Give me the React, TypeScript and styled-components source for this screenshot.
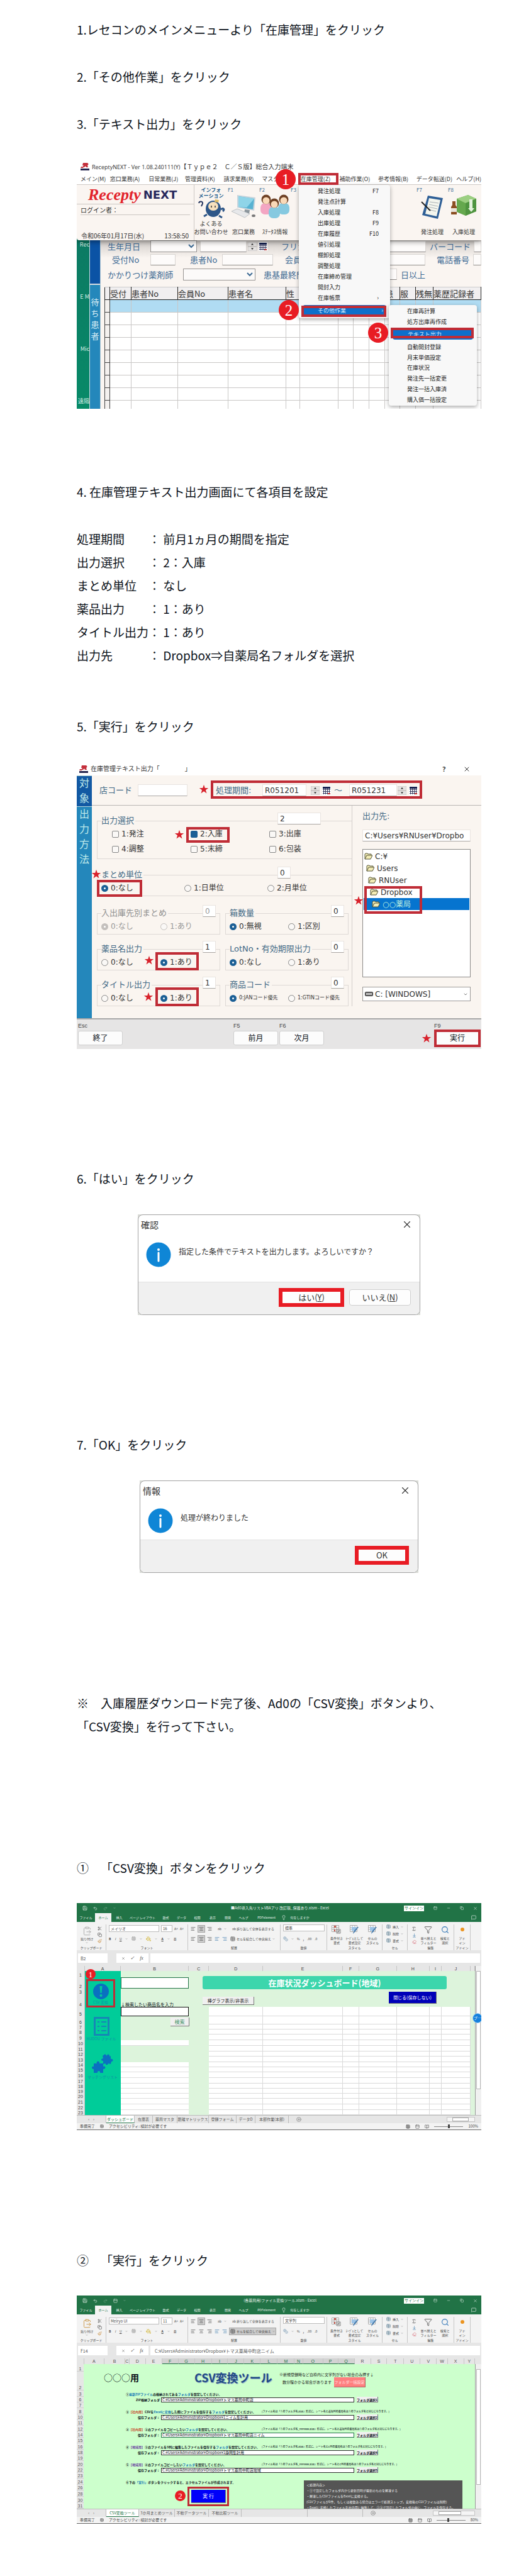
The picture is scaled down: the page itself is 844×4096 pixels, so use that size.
import React from "react";
import styled, { createGlobalStyle, css } from "styled-components";
import {
  Save, Undo2, Redo2, Lightbulb, MessageSquare, Scissors, Copy, Paintbrush, Search, Filter,
  X, Minus, Eraser, Sigma, ClipboardPaste, Grid3x3, Table, PaintBucket, AlignLeft,
  AlignCenter, AlignRight, CirclePlus, ChevronDown, PanelTop, Coins, ArrowDownToLine, BookOpen,
} from "lucide-react";

const JP = '"Noto Sans CJK JP", sans-serif';
const VERDANA = '"DejaVu Sans", "Noto Sans CJK JP", sans-serif';
const RED = "#bf2c36";

const GlobalStyle = createGlobalStyle`
  *, *::before, *::after { box-sizing: border-box; }
  body { margin: 0; background: #fff; color: #0b1119; font-family: ${JP}; text-spacing-trim: space-all; }
  p, dl, dd, ul, fieldset, figure { margin: 0; padding: 0; }
  ul { list-style: none; }
  fieldset { min-width: 0; }
  button, input, select { font: inherit; color: inherit; margin: 0; padding: 0; border: 0; background: none; border-radius: 0; min-width: 0; }
  svg { display: block; flex: none; }
`;

/* ---------- page ---------- */

const Page = styled.main`
  padding: 28px 79px 85px 122px;
`;

const Line = styled.p<{ $top?: number }>`
  margin-top: ${(p) => p.$top ?? 0}px;
  font-size: 19px;
  line-height: 37px;
`;

const Settings = styled.dl`
  margin-top: 38px;
  display: grid;
  grid-template-columns: 114px 1fr;
  font-size: 19px;
  line-height: 37px;
`;

const Shot = styled.figure<{ $h: number; $top: number; $w?: number; $bg?: string; $font?: string }>`
  position: relative;
  margin: ${(p) => p.$top}px auto 0;
  max-width: ${(p) => (p.$w ? `${p.$w}px` : "none")};
  min-height: ${(p) => p.$h}px;
  display: flex;
  flex-direction: column;
  overflow: hidden;
  line-height: 1;
  white-space: nowrap;
  background: ${(p) => p.$bg ?? "#fff"};
  font-family: ${(p) => p.$font ?? JP};
`;

/* ---------- annotations laid over the screens ---------- */

type Spot = { $x: number; $y: number };

const Frame = styled.span<Spot & { $w: number; $h: number; $b?: number }>`
  position: absolute;
  z-index: 4;
  pointer-events: none;
  left: ${(p) => p.$x}px;
  top: ${(p) => p.$y}px;
  width: ${(p) => p.$w}px;
  height: ${(p) => p.$h}px;
  border: ${(p) => p.$b ?? 4}px solid ${RED};
`;

const Badge = styled.span<Spot & { $d: number }>`
  position: absolute;
  z-index: 5;
  left: ${(p) => p.$x}px;
  top: ${(p) => p.$y}px;
  width: ${(p) => p.$d}px;
  height: ${(p) => p.$d}px;
  display: grid;
  place-items: center;
  border-radius: 50%;
  background: #e81c24;
  color: #fff;
  font-family: "Liberation Serif", serif;
  font-size: ${(p) => (p.$d > 20 ? 25 : 13)}px;
`;

const StarSpot = styled.span<Spot>`
  position: absolute;
  z-index: 4;
  left: ${(p) => p.$x}px;
  top: ${(p) => p.$y}px;
`;

const Star = ({ x, y }: { x: number; y: number }) => (
  <StarSpot $x={x - 8} $y={y - 8}>
    <svg width="16" height="16" viewBox="0 0 16 16">
      <path d="M8 .8l1.8 5.1h5.4l-4.3 3.3 1.6 5.3L8 11.3l-4.5 3.2 1.6-5.3L.8 5.9h5.4z" fill="#d8222c" />
    </svg>
  </StarSpot>
);

/* ---------- shared drawings ---------- */

const NextLogo = () => (
  <svg width="14" height="12" viewBox="0 0 14 12">
    <path d="M4 0h7c2 1 2 3 0 4l1 3H9L8 5 6 7H3l2-3H3zM1 6h4L4 8H0z" fill="#c4303c" />
    <path d="M0 9h14v3H0z" fill="#25264f" />
  </svg>
);

const CalendarIcon = () => (
  <svg width="14" height="14" viewBox="0 0 14 14">
    <rect width="14" height="14" fill="#fff" />
    <rect x="1" y="1" width="12" height="3" fill="#16204f" />
    <path d="M1 5.500h12M1 8.500h12M1 11.500h12M2.500 4v9M5.500 4v9M8.500 4v9M11.500 4v9" stroke="#3c3f63" />
    <path d="M9 11h4v2H9z" fill="#b33" />
  </svg>
);

const SpinIcon = () => (
  <svg width="14" height="14" viewBox="0 0 14 14">
    <path d="M0 0h14v6.500H0zM0 7.500h14V14H0z" fill="#e4e2e1" stroke="#b5b2b0" strokeWidth=".6" />
    <path d="M7 2l2 2.500H5zM7 12l2-2.500H5z" fill="#222" />
  </svg>
);

const InfoIcon = () => (
  <svg width="40" height="40" viewBox="0 0 40 40">
    <circle cx="20" cy="20" r="19.500" fill="#0f86d6" />
    <circle cx="20" cy="12" r="2" fill="#fff" />
    <path d="M20 17v13" stroke="#fff" strokeWidth="3" strokeLinecap="round" />
  </svg>
);

/* ---------- step 1-3: main menu ---------- */

const TopWindow = styled.div`
  position: relative;
  z-index: 2;
  height: 128px;
  background: #faf5f1;
  border-bottom-left-radius: 4px;
  box-shadow: 0 2px 8px rgba(0, 0, 0, 0.45);
`;

const TitleBar = styled.div`
  display: flex;
  align-items: center;
  gap: 4px;
  height: 22px;
  padding-left: 6px;
  background: #fff;
  color: #333;
  font-size: 10px;
  b { font: 9px "Open Sans", sans-serif; }
`;

const MenuBar = styled.nav`
  display: grid;
  grid-template-columns: 47fr 62fr 58fr 62fr 61fr 62fr 62fr 62fr 61fr 64fr 36fr;
  align-items: center;
  height: 18px;
  padding-left: 6px;
  background: #fff;
  border-bottom: 1px solid #cfcac6;
  font-size: 9px;
  a { color: #333; text-decoration: none; }
`;

const ToolRow = styled.div`
  display: flex;
  height: 88px;
`;

const LogoPanel = styled.div`
  flex: none;
  width: 187px;
  border-right: 1px solid #cbc6c2;
  display: flex;
  flex-direction: column;
  font-size: 10px;
  color: #333;
`;

const Logo = styled.div`
  height: 31px;
  padding: 2px 0 0 18px;
  border-bottom: 1px solid #cbc6c2;
  display: flex;
  align-items: center;
  gap: 4px;
  color: #e2232b;
  font: italic bold 26px/26px "Liberation Serif", serif;
  b { color: #27285c; font: bold 18px/20px "DejaVu Sans", sans-serif; }
`;

const Login = styled.div`
  height: 17px;
  margin: 0 6px;
  padding-top: 4px;
  border-bottom: 1px solid #cbc6c2;
`;

const Clock = styled.div`
  display: flex;
  justify-content: space-between;
  margin-top: auto;
  padding: 0 8px 2px 7px;
  font-size: 10px;
`;

const ToolButton = styled.button<{ $w?: number }>`
  flex: none;
  width: ${(p) => p.$w ?? 50}px;
  display: flex;
  flex-direction: column;
  align-items: center;
  padding: 3px 0 7px;
  font-size: 9px;
  line-height: 13px;
  color: #333;
  svg { margin-top: 2px; }
  small { align-self: flex-start; font-size: 8px; line-height: 10px; color: #3a6d96; }
  span { margin-top: auto; }
  strong { font-size: 8px; line-height: 9px; color: #1e5d8d; }
`;

const Mascot = () => (
  <svg width="48" height="32" viewBox="0 0 48 32">
    <path d="M4 6c1-4 7-3 6 1l-2 4" fill="none" stroke="#26365f" strokeWidth="2" />
    <ellipse cx="27" cy="15" rx="12" ry="13" fill="#2d5688" />
    <ellipse cx="27" cy="11" rx="8" ry="7" fill="#f7e0bd" />
    <path d="M24 10v3M30 10v3" stroke="#333" strokeWidth="1.500" />
    <path d="M17 24l-5 3M36 26l5 3M39 16c4-3 7 0 3 3" fill="none" stroke="#2d5688" strokeWidth="3" />
    <path d="M30 0l6 1-1 4-6-1z" fill="#e3bd62" />
  </svg>
);
const Computer = () => (
  <svg width="40" height="38" viewBox="0 0 40 38">
    <path d="M10 1l29 4-2 21-27-5z" fill="#c8d4dc" />
    <path d="M12 3l25 4-2 17-23-4z" fill="#57b2d2" />
    <path d="M12 3l25 4-12 14-13-1z" fill="#8fd4e8" />
    <path d="M22 24l8 1-1 6h-8z" fill="#8b959c" />
    <path d="M1 27l9-4 20 8-8 6z" fill="#e7e8ea" stroke="#aab0b5" strokeWidth=".7" />
    <ellipse cx="36" cy="34" rx="3" ry="2" fill="#777" />
  </svg>
);
const People = () => (
  <svg width="46" height="38" viewBox="0 0 46 38">
    {[[9, 8, "#f3a6c3"], [37, 8, "#86c9e0"], [22, 14, "#86c9e0"]].map(([x, y, c], i) => (
      <g key={i}>
        <rect x={+x - 9} y={+y + 6} width="18" height="18" rx="7" fill={String(c)} />
        <circle cx={+x} cy={+y} r="7.500" fill="#6d4024" />
        <circle cx={+x} cy={+y + 2} r="5.500" fill="#f9d9b8" />
      </g>
    ))}
  </svg>
);
const Clipboard = () => (
  <svg width="36" height="40" viewBox="0 0 36 40">
    <path d="M11 2l24 4-8 33L2 33z" fill="#2f5f96" />
    <path d="M13 6l18 3-6 26-18-4z" fill="#f4f6ee" />
    <path d="M14 12l14 2M13 16l14 3M12 20l14 3M11 24l13 3" stroke="#a8b0b3" />
    <path d="M1 12l14 14" stroke="#222" strokeWidth="2" />
  </svg>
);
const BoxIcon = () => (
  <svg width="42" height="36" viewBox="0 0 42 36">
    <path d="M10 7L28 1l13 6v20l-17 7-14-6z" fill="#65a84e" />
    <path d="M10 7L28 1l13 6-17 7z" fill="#9ccf82" />
    <path d="M24 14l17-7v20l-17 7z" fill="#4f9440" />
    <path d="M30 8h5v14h3l-5 6-5-6h2z" fill="#e4f2dd" />
    <path d="M3 11h5v6l2 3v12H1V20l2-3z" fill="#8b4e22" />
    <path d="M1 22h9v6H1z" fill="#e9e4da" />
  </svg>
);

const AppArea = styled.div`
  flex: 1 1 0;
  min-height: 0;
  overflow: hidden;
  display: grid;
  grid-template-columns: 20px 18px 1fr;
`;

const Desktop = styled.div`
  position: relative;
  background: linear-gradient(#0c7a63, #078a68);
  color: #d9efe8;
  font-size: 9px;
  display: flex;
  flex-direction: column;
  align-items: flex-end;
  gap: 74px;
  padding-top: 2px;
  overflow: hidden;
`;

const SideTabs = styled.div`
  display: grid;
  grid-template-rows: 69px 1fr;
  color: #d9eef5;
  font-size: 13px;
  line-height: 18px;
  text-align: center;
  white-space: normal;
  border-left: 1px solid #cfdde2;
  border-right: 1px solid #b7cbd5;
  div:first-child { background: #0b53a5; }
  div:last-child { background: #2487bb; border-top: 2px solid #d7dce0; padding: 18px 1px 0; }
`;

const PatientPane = styled.div`
  background: linear-gradient(#cfcac7, #faf5f1 28px);
  min-width: 0;
  overflow: hidden;
`;

const FormRow = styled.div<{ $cols: string; $h: number }>`
  display: grid;
  grid-template-columns: ${(p) => p.$cols};
  align-items: center;
  height: ${(p) => p.$h}px;
  font-size: 13px;
  color: #3d6a94;
`;

const Field = styled.input`
  width: 100%;
  height: 18px;
  background: #fdfbfa;
  border: 1px solid #d9d5d2;
  border-bottom: 1px solid #8e8b89;
`;

const Dropdown = styled.select`
  width: 100%;
  height: 19px;
  background: #fcfaf9;
  border: 1px solid #989593;
`;

const PatientTable = styled.table`
  width: calc(100% - 6px);
  margin: 8px 0 0 6px;
  table-layout: fixed;
  border-collapse: collapse;
  background: #fff;
  th, td { height: 20px; padding: 0; border: 1px solid #c9c7c6; }
  th { background: #f1eff0; border: 1px solid #222; border-top-color: #ccc; font-size: 13px; line-height: 16px; font-weight: 400; text-align: left; color: #333; overflow: hidden; }
  td:first-child { background: #f4f1ef; border-color: #444; }
  tbody tr:first-child td + td { background: #b0dcf3; }
`;

const Popup = styled.ul<Spot & { $w: number; $h: number; $pad: number }>`
  position: absolute;
  z-index: 3;
  left: ${(p) => p.$x}px;
  top: ${(p) => p.$y}px;
  width: ${(p) => p.$w}px;
  height: ${(p) => p.$h}px;
  padding: 1px 0;
  display: flex;
  flex-direction: column;
  background: #f8f8f8;
  border-radius: 4px;
  box-shadow: 0 2px 6px rgba(0, 0, 0, 0.35);
  font-size: 9px;
  color: #222;
  li { flex: 1; display: flex; align-items: center; justify-content: space-between; padding: 0 18px 0 ${(p) => p.$pad}px; }
`;

const PopupActive = styled.li`
  margin: 3px 6px;
  border-radius: 4px;
  background: #0d6fcb;
  color: #d9ecff;
  && { padding: 0 5px 0 24px; }
`;

const MENU: [string, string?][] = [
  ["発注処理", "F7"], ["発注点計算"], ["入庫処理", "F8"], ["出庫処理", "F9"], ["在庫履歴", "F10"], ["値引処理"],
  ["棚卸処理"], ["調整処理"], ["在庫締め管理"], ["開封入力"], ["在庫帳票", "›"],
];
const TABLE_COLS = [8, 34, 74, 80, 92, 22, 61, 24, 25, 25, 24, 25, 28, 76];
const TABLE_HEADS = ["", "受付", "患者No", "会員No", "患者名", "性", "", "", "", "", "患", "服", "残無", "薬歴記録者"];

const MainMenuShot = () => (
  <Shot $h={396} $top={39} $bg="#0a8067">
    <TopWindow>
      <TitleBar>
        <NextLogo />
        <span><b>ReceptyNEXT - Ver 1.08.240111(Y)</b>【Ｔｙｐｅ２　Ｃ／Ｓ版】総合入力端末</span>
      </TitleBar>
      <MenuBar>
        {["メイン(M)", "窓口業務(A)", "日常業務(J)", "管理資料(K)", "請求業務(R)", "マスタ", "在庫管理(Z)", "補助作業(O)", "参考情報(B)", "データ転送(D)", "ヘルプ(H)"].map((m) => (
          <a href="#menu" key={m}>{m}</a>
        ))}
      </MenuBar>
      <ToolRow>
        <LogoPanel>
          <Logo>Recepty<b>NEXT</b></Logo>
          <Login>ログイン者：</Login>
          <Clock><span>令和06年01月17日(水)</span><span>13:58:50</span></Clock>
        </LogoPanel>
        <ToolButton $w={53}><strong>インフォ<br />メーション</strong><Mascot /><span>よくある<br />お問い合わせ</span></ToolButton>
        <ToolButton><small>F1</small><Computer /><span>窓口業務</span></ToolButton>
        <ToolButton><small>F2</small><People /><span>ｽﾃｰﾀｽ情報</span></ToolButton>
        <ToolButton $w={200}><small>F3</small></ToolButton>
        <ToolButton><small>F7</small><Clipboard /><span>発注処理</span></ToolButton>
        <ToolButton><small>F8</small><BoxIcon /><span>入庫処理</span></ToolButton>
      </ToolRow>
    </TopWindow>
    <AppArea>
      <Desktop><span>Rec</span><span>E M</span><span>Mic</span><span>遠隔</span></Desktop>
      <SideTabs><div /><div>待ち患者</div></SideTabs>
      <PatientPane>
        <FormRow $h={19} $cols="11px 68px 74px 5px 74px 2px 14px 3px 14px 22px 60px 170px 6px 70px 1fr">
          <span /><span>生年月日</span><Dropdown aria-label="生年月日の元号" /><span /><Field aria-label="生年月日" /><span /><SpinIcon /><span /><CalendarIcon />
          <span /><span>フリガナ</span><Field aria-label="フリガナ" /><span /><span>バーコード</span><Field aria-label="バーコード" />
        </FormRow>
        <FormRow $h={23} $cols="18px 61px 40px 23px 51px 81px 19px 52px 171px 18px 58px 1fr">
          <span /><span>受付No</span><Field aria-label="受付No" /><span /><span>患者No</span><Field aria-label="患者No" /><span />
          <span>会員No</span><Field aria-label="会員No" /><span /><span>電話番号</span><Field aria-label="電話番号" />
        </FormRow>
        <FormRow $h={24} $cols="11px 120px 115px 13px 80px 132px 6px 1fr">
          <span /><span>かかりつけ薬剤師</span><Dropdown aria-label="かかりつけ薬剤師" /><span /><span>患基最終間</span><Field aria-label="日数" /><span /><span>日以上</span>
        </FormRow>
        <PatientTable>
          <colgroup>{TABLE_COLS.map((w, i) => <col key={i} width={`${(w / 598) * 100}%`} />)}</colgroup>
          <thead><tr>{TABLE_HEADS.map((h, i) => <th key={i}>{h}</th>)}</tr></thead>
          <tbody>{Array.from({ length: 9 }, (_, r) => <tr key={r}>{TABLE_COLS.map((_, c) => <td key={c} />)}</tr>)}</tbody>
        </PatientTable>
      </PatientPane>
    </AppArea>
    <Popup $x={353} $y={40} $w={145} $h={212} $pad={30}>
      {MENU.map(([t, k]) => <li key={t}><span>{t}</span><span>{k}</span></li>)}
      <PopupActive><span>その他作業</span><span>›</span></PopupActive>
    </Popup>
    <Popup $x={496} $y={231} $w={140} $h={160} $pad={29}>
      <li>在庫再計算</li><li>処方出庫再作成</li>
      <PopupActive>テキスト出力</PopupActive>
      {["自動開封登録", "月末単価設定", "在庫状況", "発注先一括変更", "発注一括入庫済", "購入価一括設定"].map((t) => <li key={t}>{t}</li>)}
    </Popup>
    <Frame $x={352} $y={21} $w={64} $h={19} />
    <Frame $x={357} $y={232} $w={135} $h={18} />
    <Frame $x={499} $y={267} $w={132} $h={17} />
    <Badge $x={316} $y={15} $d={32}>1</Badge>
    <Badge $x={321} $y={223} $d={32}>2</Badge>
    <Badge $x={463} $y={259} $d={32}>3</Badge>
  </Shot>
);

/* ---------- step 5: text output screen ---------- */

const OutTitle = styled(TitleBar)`
  height: 21px;
  padding: 0 13px 0 4px;
  span { flex: 1; }
  button { width: 20px; margin-left: 12px; display: grid; place-items: center; font: bold 10px "Open Sans", sans-serif; }
`;

const OutBody = styled.div`
  flex: 1;
  display: grid;
  grid-template-columns: 24px 1fr;
`;

const OutNav = styled.div`
  display: grid;
  grid-template-rows: 49px 1fr;
  font-size: 16px;
  line-height: 24px;
  text-align: center;
  white-space: normal;
  color: #bfe9ea;
  div { padding: 0 4px; background: #2487bb; border-top: 1px solid #b5d6dc; }
  div:first-child { background: #1259a3; }
`;

const OutHead = styled.div`
  display: grid;
  grid-template-columns: 61px 79px 45px 74px 70px 7px 14px 4px 14px 5px 18px 6px 76px 1px 14px 4px 14px;
  align-items: center;
  height: 48px;
  padding-left: 12px;
  border-bottom: 1px solid #b9b5b2;
  font-size: 13px;
  color: #436a86;
`;

const TextBox = styled.input<{ $w?: number; $off?: boolean }>`
  width: ${(p) => (p.$w ? `${p.$w}px` : "100%")};
  height: 19px;
  padding-left: 3px;
  font-size: 12px;
  color: ${(p) => (p.$off ? "#999" : "#333")};
  background: #fff;
  border: 1px solid #e9e4e0;
  border-bottom-color: #aaa6a3;
`;

const OutMain = styled.div`
  display: grid;
  grid-template-columns: minmax(0, 1fr) 205px;
`;

const Groups = styled.div`
  padding: 15px 0 0 8px;
  border-right: 1px solid #d2cdc9;
`;

const Pair = styled.div<{ $top: number }>`
  display: grid;
  grid-template-columns: 196px 196px;
  gap: 8px;
  margin-top: ${(p) => p.$top}px;
`;

const Group = styled.fieldset<{ $h: number; $top?: number; $off?: boolean; $open?: boolean }>`
  position: relative;
  height: ${(p) => p.$h}px;
  margin-top: ${(p) => p.$top ?? 0}px;
  padding: 0 0 0 6px;
  border: 1px solid #ded9d5;
  ${(p) => p.$open && css`border-right: 0;`}
  color: ${(p) => (p.$off ? "#999" : "#333")};
  legend { padding: 0 2px 0 0; font-size: 13px; line-height: 18px; color: ${(p) => (p.$off ? "#8f8f8f" : "#436a86")}; }
`;

const GroupValue = styled.span<{ $x: number }>`
  position: absolute;
  left: ${(p) => p.$x}px;
  top: -22px;
`;

const Options = styled.div<{ $cols: string; $pad?: number; $small?: boolean }>`
  display: grid;
  grid-template-columns: ${(p) => p.$cols};
  row-gap: 8px;
  padding: 4px 0 0 ${(p) => p.$pad ?? 0}px;
  font-size: ${(p) => (p.$small ? 8 : 12)}px;
  line-height: 16px;
  label { display: flex; align-items: center; gap: 4px; }
`;

const Tick = styled.input`
  appearance: none;
  flex: none;
  width: 11px;
  height: 11px;
  border: 1px solid #888;
  background: #faf8f6;
  border-radius: ${(p) => (p.type === "radio" ? "50%" : "2px")};
  &:checked { ${(p) => (p.type === "radio" ? "border: 4px solid #1b5f95; background: #fff;" : "background: #1b5f95; border-color: #1b5f95;")} }
  &:disabled { border-color: #c4c0bd; }
`;

const OutSide = styled.div`
  display: flex;
  flex-direction: column;
  padding: 9px 17px 0 16px;
  font-size: 12px;
  color: #333;
  > label { font-size: 13px; line-height: 16px; color: #436a86; margin-bottom: 13px; }
`;

const Tree = styled.ul`
  height: 204px;
  margin-top: 12px;
  padding: 1px;
  background: #fff;
  border: 1px solid #8c8a88;
`;

const TreeRow = styled.li<{ $level: number; $on?: boolean }>`
  display: flex;
  align-items: center;
  gap: 4px;
  height: 19px;
  padding-left: ${(p) => 1 + p.$level * 3}px;
  background: ${(p) => (p.$on ? "#0674cf" : "transparent")};
  color: ${(p) => (p.$on ? "#bff0e0" : "inherit")};
`;

const DriveBox = styled.div`
  display: flex;
  align-items: center;
  gap: 3px;
  height: 23px;
  margin-top: 15px;
  padding: 0 3px;
  background: #fff;
  border: 1px solid #9c9a98;
  color: #333;
  select { flex: 1; appearance: none; }
`;

const OutFoot = styled.div`
  display: grid;
  grid-template-columns: 71px 176px 71px 2px 71px 175px 74px 1fr;
  padding: 5px 0 0 2px;
  height: 49px;
  background: #e6e5e5;
  border-top: 2px solid #a9a9a9;
  font-size: 12px;
  div { display: flex; flex-direction: column; gap: 2px; }
  small { font: 9px/11px "Liberation Sans", sans-serif; color: #444; }
  button { height: 23px; background: #fcfcfc; border: 1px solid #cfcfcf; border-radius: 3px; }
`;

const Folder = () => (
  <svg width="13" height="11" viewBox="0 0 13 11">
    <path d="M1 10V2l1-1h3l1 1h5v2M1 10l3-6h9l-3 6z" fill="#f3ecb5" stroke="#555438" />
  </svg>
);

const DriveIcon = () => (
  <svg width="13" height="7" viewBox="0 0 13 7">
    <rect x=".5" y=".5" width="12" height="6" rx="1" fill="#8a8a8a" stroke="#222" />
    <path d="M2 3.500h9" stroke="#fff" />
  </svg>
);

type OptGroup = { name: string; legend: string; value: string; x: number; sel: number; opts: string[]; cols: string; off?: boolean; small?: boolean; top?: number; open?: boolean };

const RadioGroup = (g: OptGroup) => (
  <Group $h={43} $top={g.top} $off={g.off} $open={g.open} disabled={g.off}>
    <legend>{g.legend}</legend>
    <GroupValue $x={g.x}><TextBox $w={21} $off={g.off} aria-label={g.legend} defaultValue={g.value} /></GroupValue>
    <Options $cols={g.cols} $small={g.small}>
      {g.opts.map((o, i) => <label key={o}><Tick type="radio" name={g.name} defaultChecked={i === g.sel} />{o}</label>)}
    </Options>
  </Group>
);

const OutputShot = () => (
  <Shot $h={456} $top={39} $bg="#faf5f0" $font={VERDANA}>
    <OutTitle><NextLogo /><span>在庫管理テキスト出力「　　　　」</span><button>?</button><button aria-label="閉じる"><X size={12} /></button></OutTitle>
    <OutBody>
      <OutNav><div>対象</div><div>出力方法</div></OutNav>
      <div>
        <OutHead>
          <label htmlFor="shop">店コード</label><TextBox id="shop" /><span /><label htmlFor="from">処理期間:</label>
          <TextBox id="from" defaultValue="R051201" /><span /><SpinIcon /><span /><CalendarIcon /><span /><span>～</span><span />
          <TextBox aria-label="処理期間の終わり" defaultValue="R051231" /><span /><SpinIcon /><span /><CalendarIcon />
        </OutHead>
        <OutMain>
          <Groups>
            <Group $h={70} $open>
              <legend>出力選択</legend>
              <GroupValue $x={286}><TextBox $w={69} aria-label="出力選択" defaultValue="2" /></GroupValue>
              <Options $cols="125px 125px 1fr" $pad={17}>
                {["1:発注", "2:入庫", "3:出庫", "4:調整", "5:末締", "6:包装"].map((o, i) => (
                  <label key={o}><Tick type="checkbox" defaultChecked={i === 1} />{o}</label>
                ))}
              </Options>
            </Group>
            <RadioGroup name="unit" legend="まとめ単位" value="0" x={286} sel={0} opts={["0:なし", "1:日単位", "2:月単位"]} cols="132px 132px 1fr" top={16} open />
            <Pair $top={18}>
              <RadioGroup name="dest" legend="入出庫先別まとめ" value="0" x={167} sel={0} opts={["0:なし", "1:あり"]} cols="94px 1fr" off />
              <RadioGroup name="boxes" legend="箱数量" value="0" x={167} sel={0} opts={["0:無視", "1:区別"]} cols="93px 1fr" />
            </Pair>
            <Pair $top={14}>
              <RadioGroup name="drug" legend="薬品名出力" value="1" x={167} sel={1} opts={["0:なし", "1:あり"]} cols="94px 1fr" />
              <RadioGroup name="lot" legend="LotNo・有効期限出力" value="0" x={167} sel={0} opts={["0:なし", "1:あり"]} cols="93px 1fr" />
            </Pair>
            <Pair $top={14}>
              <RadioGroup name="title" legend="タイトル出力" value="1" x={167} sel={1} opts={["0:なし", "1:あり"]} cols="94px 1fr" />
              <RadioGroup name="code" legend="商品コード" value="0" x={167} sel={0} opts={["0:JANコード優先", "1:GTINコード優先"]} cols="93px 1fr" small />
            </Pair>
          </Groups>
          <OutSide>
            <label htmlFor="path">出力先:</label>
            <TextBox id="path" defaultValue="C:¥Users¥RNUser¥Dropbo" />
            <Tree>
              {["C:¥", "Users", "RNUser", "Dropbox", "○○薬局"].map((t, i) => (
                <TreeRow key={t} $level={i} $on={i === 4}><Folder />{t}</TreeRow>
              ))}
            </Tree>
            <DriveBox>
              <DriveIcon />
              <select aria-label="ドライブ"><option>C: [WINDOWS]</option></select>
              <ChevronDown size={8} />
            </DriveBox>
          </OutSide>
        </OutMain>
      </div>
    </OutBody>
    <OutFoot>
      <div><small>Esc</small><button>終了</button></div><span />
      <div><small>F5</small><button>前月</button></div><span />
      <div><small>F6</small><button>次月</button></div><span />
      <div><small>F9</small><button>実行</button></div>
    </OutFoot>
    <Star x={202} y={43} /><Frame $x={213} $y={29} $w={336} $h={29} />
    <Star x={163} y={115} /><Frame $x={174} $y={103} $w={69} $h={25} />
    <Star x={31} y={178} /><Frame $x={32} $y={187} $w={72} $h={27} />
    <Star x={115} y={315} /><Frame $x={125} $y={302} $w={69} $h={29} />
    <Star x={114} y={373} /><Frame $x={125} $y={358} $w={69} $h={30} />
    <Star x={448} y={220} /><Frame $x={457} $y={197} $w={92} $h={44} />
    <Star x={556} y={439} /><Frame $x={568} $y={425} $w={74} $h={28} />
  </Shot>
);

/* ---------- steps 6-7: message boxes ---------- */

const DialogWindow = styled.div`
  flex: 1;
  display: flex;
  flex-direction: column;
  border: 1px solid #a3a3a3;
  border-radius: 8px;
  overflow: hidden;
  background: #fff;
  color: #333;
`;

const DialogHead = styled.div`
  display: flex;
  justify-content: space-between;
  align-items: center;
  height: 29px;
  padding: 0 11px 0 4px;
  font-size: 14px;
`;

const DialogBody = styled.div`
  flex: 1;
  display: flex;
  gap: 12px;
  padding: 14px 0 0 12px;
  font-size: 12px;
  line-height: 30px;
`;

const DialogFoot = styled.div`
  display: flex;
  justify-content: flex-end;
  align-items: flex-start;
  gap: 8px;
  height: 52px;
  padding: 9px 14px 0;
  background: #f0f0f0;
  border-top: 1px solid #e2e2e2;
`;

const DialogButton = styled.button<{ $w: number; $marked?: boolean }>`
  width: ${(p) => p.$w}px;
  height: ${(p) => (p.$marked ? 30 : 26)}px;
  margin-top: ${(p) => (p.$marked ? 0 : 2)}px;
  border: ${(p) => (p.$marked ? "6px solid #e81c24" : "1px solid #cfcfcf")};
  border-radius: ${(p) => (p.$marked ? 0 : 4)}px;
  background: #fdfdfd;
  font-size: 13px;
  line-height: 16px;
`;

const Dialog = ({ w, h, title, text, children }: { w: number; h: number; title: string; text: string; children: React.ReactNode }) => (
  <Shot $h={h} $w={w} $top={39} $bg="#d9dbd6">
    <DialogWindow role="dialog" aria-label={title}>
      <DialogHead>{title}<button aria-label="閉じる"><X size={18} strokeWidth={1.5} /></button></DialogHead>
      <DialogBody><InfoIcon />{text}</DialogBody>
      <DialogFoot>{children}</DialogFoot>
    </DialogWindow>
  </Shot>
);

/* ---------- spreadsheet chrome ---------- */

const GREEN = "#217346";

const XlTitle = styled.div`
  display: grid;
  grid-template-columns: 1fr auto 1fr;
  align-items: center;
  height: 16px;
  padding: 0 6px 0 9px;
  background: ${GREEN};
  color: #e4f0e9;
  font-size: 6px;
  div { display: flex; align-items: center; gap: 9px; }
  div:last-child { justify-content: flex-end; gap: 15px; }
  button { width: 32px; height: 9px; background: #fff; color: ${GREEN}; }
`;

const XlTabs = styled.div`
  display: grid;
  grid-template-columns: 29px 26px 25px 49px 25px 25px 25px 24px 24px 26px 47px 13px 33px 1fr;
  align-items: center;
  height: 14px;
  padding-right: 8px;
  background: ${GREEN};
  color: #e4f0e9;
  font-size: 5px;
  > svg:last-child { justify-self: end; }
`;

const XlTab = styled.span<{ $on?: boolean }>`
  line-height: 14px;
  text-align: center;
  ${(p) => p.$on && css`background: #f3f3f3; color: ${GREEN};`}
`;

const Ribbon = styled.div`
  display: grid;
  grid-template-columns: 47fr 130fr 147fr 74fr 88fr 40fr 74fr 26fr 17fr;
  height: 45px;
  padding-top: 4px;
  background: #f3f3f3;
  color: #444;
  font-size: 5px;
`;

const RibbonGroup = styled.div`
  display: grid;
  grid-template-rows: 1fr 8px;
  min-width: 0;
  border-right: 1px solid #c6c6c6;
  > small { font-size: 5px; line-height: 7px; text-align: center; color: #444; }
`;

const RibbonCells = styled.div`
  display: flex;
  justify-content: space-evenly;
  align-items: center;
`;

const Stack = styled.div<{ $gap?: number }>`
  display: flex;
  flex-direction: column;
  align-items: center;
  gap: ${(p) => p.$gap ?? 3}px;
  text-align: center;
  line-height: 7px;
`;

const Rows = styled.div`
  display: grid;
  grid-template-rows: 13px 13px;
  gap: 3px;
  padding: 0 3px 0 4px;
`;

const Strip = styled.div<{ $gap?: number }>`
  display: flex;
  align-items: center;
  gap: ${(p) => p.$gap ?? 6}px;
`;

const MiniBox = styled.input<{ $w: number }>`
  width: ${(p) => p.$w}px;
  height: 11px;
  padding-left: 2px;
  background: #fff;
  border: 1px solid #bdbdbd;
  font-size: 6px;
`;

const Toggle = styled.span<{ $on?: boolean }>`
  display: flex;
  align-items: center;
  gap: 2px;
  padding: 1px;
  ${(p) => p.$on && css`background: #cdcdcd; outline: 1px solid #a5a5a5;`}
`;

const FormulaBar = styled.div`
  display: grid;
  grid-template-columns: 47px 62px 1fr;
  column-gap: 3px;
  height: 25px;
  padding: 5px 2px;
  background: #e6e6e6;
  color: #555;
  > div { display: flex; align-items: center; justify-content: space-evenly; margin-left: 11px; background: #fff; font: italic 8px "Liberation Serif", serif; }
`;

const FormulaInput = styled.input<{ $in?: number }>`
  height: 15px;
  width: 100%;
  background: #fff;
  padding-left: ${(p) => p.$in ?? 4}px;
  font-size: 7px;
`;

const SheetTabs = styled.div`
  display: flex;
  align-items: stretch;
  height: 13px;
  padding-right: 10px;
  background: #e6e6e6;
  border-top: 1px solid #bdbdbd;
  color: #555;
  font-size: 6px;
`;

const SheetTab = styled.button<{ $w: number; $on?: boolean }>`
  width: ${(p) => p.$w}px;
  flex: none;
  overflow: hidden;
  border-right: 1px solid #bcbcbc;
  ${(p) => p.$on && css`background: #fff; color: ${GREEN}; border-bottom: 1px solid ${GREEN};`}
`;

const HScroll = styled.div<{ $w: number; $thumb: number }>`
  align-self: center;
  margin-left: auto;
  width: ${(p) => p.$w}px;
  height: 8px;
  padding: 0 8px;
  background: #f5f5f5;
  border: 1px solid #c4c4c4;
  &::before { content: ""; display: block; width: ${(p) => p.$thumb}px; height: 6px; background: #fff; border: 1px solid #aaa; }
`;

const Status = styled.div`
  display: flex;
  align-items: center;
  gap: 8px;
  height: 11px;
  padding: 0 5px;
  background: #f3f3f3;
  border-bottom: 1px solid #6a6a6a;
  color: #444;
  font-size: 6px;
  > span:nth-child(3) { flex: 1; }
`;

const ZoomLine = styled.span<{ $at: number }>`
  width: 46px;
  height: 6px;
  background: linear-gradient(#888, #888) center / 100% 1px no-repeat;
  &::before { content: ""; display: block; margin-left: ${(p) => p.$at}px; width: 3px; height: 6px; background: #444; }
`;

const VScroll = styled.div<{ $thumb: number }>`
  width: 10px;
  flex: none;
  background: #f0f0f0;
  border-left: 1px solid #999;
  padding: 8px 1px;
  &::before { content: ""; display: block; height: ${(p) => p.$thumb}px; background: #fff; border: 1px solid #b5b5b5; }
`;

const down = <ChevronDown size={4} />;

const TableBrush = ({ kind }: { kind: number }) => (
  <svg width="15" height="14" viewBox="0 0 15 14">
    <path d="M.5 .5h11v10H.5zM.5 4h11M.5 7h11M4 .5v10M8 .5v10" fill="#fff" stroke="#999" strokeWidth=".8" />
    {kind === 0 ? <path d="M4 1h3v3H4zM4 7h2v3H4z" fill="#c8584b" /> : <path d="M3 3h7v6H3z" fill="#9cc3e6" />}
    {kind === 0 ? <path d="M8 7h6v6H8zM9.500 12l3-4M9 9h4M9 11h4" fill="#fff" stroke="#555" strokeWidth=".7" /> : <path d="M14 3l-5 7-4 4 1-4 6-7z" fill="#4a7fb0" />}
  </svg>
);

type XlProps = {
  title: string; font: string; size: string; format: string; merged?: boolean; cell: string; formula?: string;
  tabs: [string, number][]; hw: number; ht: number; zoom: string; zoomAt: number; extra?: boolean; children: React.ReactNode; h: number;
};

const Spreadsheet = (p: XlProps) => (
  <Shot $h={p.h} $top={38} $bg="#e6e6e6">
    <XlTitle>
      <div><Save size={8} /><Undo2 size={7} /><Redo2 size={7} opacity={0.4} />{p.extra && <PanelTop size={7} />}{down}</div>
      <span>{p.title}</span>
      <div><button>サインイン</button><PanelTop size={6} /><Minus size={6} /><Copy size={6} /><X size={7} /></div>
    </XlTitle>
    <XlTabs>
      {["ファイル", "ホーム", "挿入", "ページ レイアウト", "数式", "データ", "校閲", "表示", "開発", "ヘルプ", "PDFelement"].map((t, i) => (
        <XlTab key={t} $on={i === 1}>{t}</XlTab>
      ))}
      <Lightbulb size={8} /><XlTab>何をしますか</XlTab><MessageSquare size={8} />
    </XlTabs>
    <Ribbon>
      <RibbonGroup>
        <RibbonCells>
          <Stack $gap={1}><ClipboardPaste size={15} strokeWidth={1.5} color={p.merged ? "#c99548" : "#aaa"} />貼り付け{down}</Stack>
          <Stack><Scissors size={7} /><Copy size={7} /><Paintbrush size={7} color="#c98b3c" /></Stack>
        </RibbonCells>
        <small>クリップボード</small>
      </RibbonGroup>
      <RibbonGroup>
        <Rows>
          <Strip $gap={3}><MiniBox $w={80} aria-label="フォント" defaultValue={p.font} /><MiniBox $w={18} aria-label="サイズ" defaultValue={p.size} /><span>A˄</span><span>A˅</span></Strip>
          <Strip $gap={6}><b>B</b><i>I</i><u>U</u>{down}<Grid3x3 size={7} color="#999" />{down}<PaintBucket size={8} color="#c9a400" />{down}<b><u>A</u></b>{down}<span>亜</span></Strip>
        </Rows>
        <small>フォント</small>
      </RibbonGroup>
      <RibbonGroup>
        <Rows>
          <Strip $gap={4}><AlignLeft size={8} /><Toggle $on><AlignCenter size={8} /></Toggle><AlignRight size={8} /><span>　ab</span>{down}<span>　ab 折り返して全体を表示する</span></Strip>
          <Strip $gap={4}><AlignLeft size={8} /><Toggle $on={!p.merged}><AlignCenter size={8} /></Toggle><AlignRight size={8} /><AlignLeft size={8} color="#3b78ad" /><AlignRight size={8} color="#3b78ad" /><Toggle $on={p.merged}><Table size={8} />セルを結合して中央揃え{down}</Toggle></Strip>
        </Rows>
        <small>配置</small>
      </RibbonGroup>
      <RibbonGroup>
        <Rows>
          <MiniBox $w={66} aria-label="表示形式" defaultValue={p.format} />
          <Strip $gap={5}><Coins size={8} color="#6b8fae" />{down}<span>%</span><b>,</b><span>.00</span><span>.0</span></Strip>
        </Rows>
        <small>数値</small>
      </RibbonGroup>
      <RibbonGroup>
        <RibbonCells>
          <Stack><TableBrush kind={0} /><span>条件付き<br />書式</span></Stack>
          <Stack><TableBrush kind={1} /><span>ﾃｰﾌﾞﾙとして<br />書式設定</span></Stack>
          <Stack><TableBrush kind={2} /><span>セルの<br />スタイル</span></Stack>
        </RibbonCells>
        <small>スタイル</small>
      </RibbonGroup>
      <RibbonGroup>
        <Stack $gap={4}>{["挿入", "削除", "書式"].map((t) => <Strip key={t} $gap={3}><Table size={7} color="#55788f" />{t}{down}</Strip>)}</Stack>
        <small>セル</small>
      </RibbonGroup>
      <RibbonGroup>
        <RibbonCells>
          <Stack><Sigma size={8} /><ArrowDownToLine size={7} color="#3b78ad" /><Eraser size={7} color="#d7626f" /></Stack>
          <Stack><Filter size={13} strokeWidth={1.5} /><span>並べ替えと<br />フィルター</span></Stack>
          <Stack><Search size={13} color="#2f75b5" /><span>検索と<br />選択</span></Stack>
        </RibbonCells>
        <small>編集</small>
      </RibbonGroup>
      <RibbonGroup>
        <Stack $gap={6}><svg width="12" height="12"><circle cx="6" cy="8" r="3" fill="#eb9420" /></svg><span>アド<br />イン</span></Stack>
        <small>アドイン</small>
      </RibbonGroup>
    </Ribbon>
    <FormulaBar>
      <FormulaInput aria-label="名前ボックス" defaultValue={p.cell} />
      <div><X size={6} /><span>✓</span><span>fx</span></div>
      <FormulaInput aria-label="数式バー" $in={7} defaultValue={p.formula} />
    </FormulaBar>
    {p.children}
    <SheetTabs>
      <SheetTab $w={47}>‹　›</SheetTab>
      {p.tabs.map(([t, w], i) => <SheetTab key={i} $w={w} $on={i === 0}>{t}</SheetTab>)}
      <Strip>　<CirclePlus size={8} strokeWidth={1.5} /></Strip>
      <HScroll $w={p.hw} $thumb={p.ht} />
    </SheetTabs>
    <Status>
      <span>準備完了</span><Table size={6} /><span>アクセシビリティ: 検討が必要です</span>
      <Grid3x3 size={7} /><PanelTop size={7} /><BookOpen size={7} /><ZoomLine $at={p.zoomAt} /><span>{p.zoom}</span>
    </Status>
  </Shot>
);

/* ---------- stock dashboard sheet ---------- */

const SheetArea = styled.div<{ $bg?: string }>`
  position: relative;
  flex: 1;
  display: flex;
  background: ${(p) => p.$bg ?? "#ddf4dc"};
`;

const Sheet = styled.table`
  flex: 1 1 0;
  width: 100%;
  min-width: 0;
  table-layout: fixed;
  border-collapse: separate;
  border-spacing: 0;
  font-size: 7px;
  th { padding: 0; height: 8px; background: #e6e6e6; border-right: 1px solid #c5c5c5; font: 7px/7px "Liberation Sans", sans-serif; color: #444; vertical-align: bottom; }
  td { padding: 0; line-height: 7px; vertical-align: bottom; }
`;

const Cell = styled.td<{ $kind: string }>`
  ${(p) => p.$kind === "menu" && css`background: #00cc99;`}
  ${(p) => p.$kind === "white" && css`background: #fff; border-bottom: 1px solid #dedede;`}
  ${(p) => p.$kind === "grid" && css`background: #fff; border-bottom: 1px solid #dadada; border-right: 1px solid #dadada;`}
  ${(p) => p.$kind === "active" && css`background: #fff; border: 1px solid ${GREEN};`}
  ${(p) => p.$kind === "entry" && css`background: #fff; border: 1px solid #111;`}
`;

const RowNumber = styled.th<{ $h: number }>`
  && { height: ${(p) => p.$h}px; }
`;

const Floating = styled.div<Spot & { $w: number; $h: number }>`
  position: absolute;
  left: ${(p) => p.$x}px;
  top: ${(p) => p.$y}px;
  width: ${(p) => p.$w}px;
  height: ${(p) => p.$h}px;
  display: grid;
  > button { width: 100%; background: #f0f0f0; font-size: 7px; border-right: 1px solid #777; border-bottom: 1px solid #777; color: #222; }
`;

const Banner = styled.div`
  display: grid;
  place-items: center;
  border-radius: 3px;
  background: #3cd6ac;
  color: #fff;
  font-size: 13px;
  font-weight: 700;
`;

const MenuLink = styled.a`
  display: flex;
  flex-direction: column;
  align-items: center;
  gap: 2px;
  color: #0e92a6;
  font-size: 6px;
  text-decoration: none;
`;

const BlueButton = styled.button<{ $pure?: boolean }>`
  && { background: ${(p) => (p.$pure ? "#0000fa" : "#0000b8")}; color: #fff; font-size: ${(p) => (p.$pure ? 8 : 7)}px; }
`;

const GreenButton = styled.button`
  && { color: #3c9065; font-size: 8px; }
`;

const Bubble = styled.span`
  display: grid;
  place-items: center;
  border-radius: 50%;
  background: #1480dc;
  border: 1px solid #9fd0f5;
  color: #fff;
  font-size: 6px;
`;

const ROW_H = [10, 18, 9, 20, 15, 13, 8, 8, 9, 9, 9, 8, 9, 8, 8, 9, 9, 8, 8, 8, 9, 9, 8];
const COLS: [string, number][] = [["", 13], ["A", 57], ["B", 108], ["C", 32], ["D", 86], ["E", 126], ["F", 26], ["G", 60], ["H", 52], ["I", 19], ["J", 46], ["", 7]];

const kindOf = (row: number, col: string) => {
  if (col === "A") return "menu";
  if (col === "B") return row === 2 ? "active" : row === 5 ? "entry" : row === 10 || row >= 14 ? "white" : "plain";
  if (col === "C" || col === "") return "plain";
  return row >= 5 ? "grid" : "plain";
};

const DashboardShot = () => (
  <Spreadsheet h={361} title="■Ad0導入先リストVBAアリ 改訂版_保護あり.xlsm  -  Excel" font="メイリオ" size="16" format="標準" cell="B2"
    tabs={[["ダッシュボード", 45], ["在庫表", 29], ["薬局マスタ", 39], ["距離マトリックス", 50], ["登録フォーム", 44], ["データD", 30], ["本部作業(本部)", 53]]}
    hw={45} ht={26} zoom="100%" zoomAt={22}>
    <SheetArea>
      <Sheet>
        <colgroup>{COLS.map(([, w], i) => <col key={i} width={`${(w / 632) * 100}%`} />)}</colgroup>
        <thead><tr>{COLS.map(([c], i) => <th key={i}>{c}</th>)}</tr></thead>
        <tbody>
          {ROW_H.map((h, r) => (
            <tr key={r}>
              <RowNumber $h={h}>{r + 1}</RowNumber>
              {COLS.slice(1).map(([c], i) => (
                <Cell key={i} $kind={kindOf(r + 1, c)}>{r === 3 && c === "B" ? "↓検索したい商品名を入力" : ""}</Cell>
              ))}
            </tr>
          ))}
        </tbody>
      </Sheet>
      <VScroll $thumb={188} />
      <Floating $x={200} $y={16} $w={388} $h={21}><Banner>在庫状況ダッシュボード(地域)</Banner></Floating>
      <Floating $x={200} $y={49} $w={82} $h={13}><button>棒グラフ表示/非表示</button></Floating>
      <Floating $x={496} $y={41} $w={76} $h={19}><BlueButton>閉じる(保存しない)</BlueButton></Floating>
      <Floating $x={149} $y={82} $w={30} $h={14}><GreenButton>検索</GreenButton></Floating>
      <Floating $x={15} $y={28} $w={46} $h={40}>
        <MenuLink href="#csv">
          <svg width="25" height="25" viewBox="0 0 25 25"><circle cx="12.500" cy="12.500" r="12.500" fill="#0a70c0" /><path d="M10.500 4h4l-1 11h-2z" fill="#00cc99" /><circle cx="12.500" cy="19" r="2" fill="#00cc99" /></svg>
          CSV 変換
        </MenuLink>
      </Floating>
      <Floating $x={15} $y={81} $w={48} $h={44}>
        <MenuLink href="#hudou">
          <svg width="25" height="30" viewBox="0 0 25 30"><path d="M1.500 1.500h22v27h-22z" fill="none" stroke="#1687b5" strokeWidth="3" /><path d="M6 8h3M6 15h3M6 22h3M12 8h8M12 15h8M12 22h8" stroke="#1687b5" strokeWidth="2" /></svg>
          HUDOU ファイル
        </MenuLink>
      </Floating>
      <Floating $x={17} $y={140} $w={48} $h={44}>
        <MenuLink href="#matching">
          <svg width="34" height="32" viewBox="0 0 34 32" fill="#0a70c0">
            <path d="M3 15h5c-2-4 5-5 4 0h6v5c4-2 5 4 0 4v6h-5c1-4-5-4-4 0H3v-6c-4 0-4-5 0-4z" />
            <path d="M17 3l4-3 3 3c0-4 5-3 4 1l2-1v5c4-1 5 4 1 4l-1 4-4-1c0 3-5 3-4 0l-4 1v-5c-4 0-4-4 0-4z" />
          </svg>
          マッチングリスト
        </MenuLink>
      </Floating>
      <Floating $x={629} $y={75} $w={16} $h={16}><Bubble>ブ…</Bubble></Floating>
      <Frame $x={15} $y={21} $w={46} $h={45} $b={3} />
      <Badge $x={14} $y={5} $d={16}>1</Badge>
    </SheetArea>
  </Spreadsheet>
);

/* ---------- CSV conversion sheet ---------- */

const ColHeads = styled.div`
  display: flex;
  height: 9px;
  padding-right: 10px;
  background: #e6e6e6;
  font: 7px/9px "Liberation Sans", sans-serif;
  color: #555;
`;

const ColHead = styled.span<{ $w: number; $on?: boolean }>`
  flex: ${(p) => p.$w} 1 0;
  text-align: center;
  border-right: 1px solid #c5c5c5;
  ${(p) => p.$on && css`background: #d3d3d3; color: ${GREEN}; border-bottom: 1px solid ${GREEN};`}
`;

const RowHeads = styled.div`
  width: 11px;
  flex: none;
  background: #e6e6e6;
  font: 7px/7px "Liberation Sans", sans-serif;
  color: #555;
  text-align: center;
`;

const RowHead = styled.div<{ $h: number }>`
  height: ${(p) => p.$h}px;
  display: grid;
  align-items: end;
  border-bottom: 1px solid #cfcfcf;
`;

const Canvas = styled.div`
  position: relative;
  flex: 1;
  min-width: 0;
  overflow: hidden;
`;

const ToolHead = styled.div`
  display: grid;
  grid-template-columns: 32px 144px 135px 1fr;
  align-items: center;
  height: 42px;
  font-size: 14px;
  h2 { margin: 0; font-size: 18px; line-height: 20px; color: #1f4a85; text-shadow: 1px 1px 1px #8fa9c4; }
`;

const Notice = styled.div`
  display: grid;
  grid-template-columns: 5px 82px 1fr;
  align-items: center;
  font-size: 6px;
  color: #222;
  > p:first-child { grid-column: 1 / -1; margin-top: 7px; line-height: 9px; }
  button { width: 50px; height: 16px; background: #ff7f7f; color: #ffe5e5; font-size: 6px; border-right: 1px solid #a66; border-bottom: 1px solid #a66; }
`;

const StepBlock = styled.div`
  display: grid;
  grid-template-columns: 67px 56px 307px 4px 34px;
  grid-template-rows: 10px 9px;
  padding-bottom: 9px;
  align-items: center;
  font-size: 5px;
  label { grid-column: 2; text-align: right; font-size: 5px; font-weight: 700; padding-right: 2px; }
  button { grid-column: 5; height: 9px; background: #f0f0f0; border-right: 1px solid #777; border-bottom: 1px solid #777; font-weight: 700; font-size: 5px; }
`;

const StepText = styled.p<{ $note?: boolean }>`
  grid-row: 1;
  grid-column: 2 / -1;
  padding-left: ${(p) => (p.$note ? 216 : 0)}px;
  font-size: ${(p) => (p.$note ? 4 : 5)}px;
  font-weight: ${(p) => (p.$note ? 500 : 700)};
  a { color: #1277b5; text-decoration: none; }
  em { font-style: normal; color: #c7401c; }
  i { font-style: normal; color: #6b3fa0; }
`;

const PathInput = styled.input<{ $on?: boolean }>`
  height: 8px;
  background: #fff;
  border: 1px solid ${(p) => (p.$on ? GREEN : "#333")};
  font-size: 6px;
  padding-left: 1px;
`;

const Process = styled.div`
  padding: 2px 4px;
  background: #555;
  color: #f0f0f0;
  font-size: 5px;
  line-height: 9px;
  overflow: hidden;
`;

const CSV_COLS: [string, number][] = [
  ["", 11], ["A", 33], ["B", 33], ["C", 6], ["D", 26], ["E", 26], ["F", 26], ["G", 26], ["H", 27], ["I", 26], ["J", 26], ["K", 26], ["L", 27], ["M", 27],
  ["N", 13], ["O", 32], ["P", 24], ["Q", 26], ["R", 26], ["S", 26], ["T", 27], ["U", 26], ["V", 26], ["W", 17], ["X", 26], ["Y", 17],
];
const CSV_ROWS: [number, number][] = [
  [1, 12], [2, 30], [3, 10], [6, 9], [7, 9], [8, 10], [10, 9], [11, 9], [12, 10], [14, 9], [15, 9], [16, 10], [18, 9], [19, 9], [20, 10], [22, 9], [23, 9], [24, 10], [26, 9], [28, 10], [30, 10], [31, 9],
];
const folder = <a href="#folder">フォルダ</a>;
const STEPS: { text: React.ReactNode; note?: string; label: string; path: string }[] = [
  { text: <>①<a href="#zip">最新ZIPファイル</a>の格納されてある{folder}を設定してください。</>, label: "ZIP格納フォルダ", path: "C:¥Users¥Administrator¥Dropbox¥トマス薬局中町店" },
  { text: <>②<em>【社内用】</em>CSVを<a href="#xl">Excelに変換</a>した際にファイルを保存する{folder}を設定してください。</>, note: "(ファイル名は「①のフォルダ名.xlsx」形式に、シート名と追加列の薬局名は①のフォルダ名と同じになります。)", label: "保存フォルダ：", path: "C:¥Users¥Administrator¥Dropbox¥1ニイム集計用" },
  { text: <>③<em>【社内用】</em>②のファイルをコピーしたい{folder}を設定してください。</>, note: "(ファイル名は「①のフォルダ名_YYYYMM.xlsx」形式に、シート名と追加列の薬局名は①のフォルダ名と同じになります。)", label: "保存フォルダ：", path: "C:¥Users¥Administrator¥Dropbox¥トマス薬局中町店ニイム" },
  { text: <>④<i>【地域用】</i>②のファイルを3列に編集したファイルを保存する{folder}を設定してください。</>, note: "(ファイル名は「①のフォルダ名.xlsx」形式に、シート名とC列の薬局名は①のフォルダ名と同じになります。)", label: "保存フォルダ：", path: "C:¥Users¥Administrator¥Dropbox¥1静岡集計用" },
  { text: <>⑤<i>【地域用】</i>④のファイルコピーしたい{folder}を設定してください。</>, note: "(ファイル名は「①のフォルダ名_YYYYMM.xlsx」形式に、シート名とC列の薬局名は①のフォルダ名と同じになります。)", label: "保存フォルダ：", path: "C:¥Users¥Administrator¥Dropbox¥トマス薬局中町店地域" },
];

const CsvToolShot = () => (
  <Spreadsheet h={362} title="(各薬局用)ファイル変換ツール.xlsm  -  Excel" font="Meiryo UI" size="11" format="文字列" merged extra cell="F14"
    formula="C:¥Users¥Administrator¥Dropbox¥トマス薬局中町店ニイム"
    tabs={[["CSV変換ツール", 52], ["3か月まとめツール", 57], ["不動データツール", 54], ["不動比較ツール", 52], ["", 105], ["", 88]]}
    hw={67} ht={36} zoom="80%" zoomAt={17}>
    <ColHeads>{CSV_COLS.map(([c, w], i) => <ColHead key={i} $w={w} $on={i >= 6 && i <= 17}>{c}</ColHead>)}</ColHeads>
    <SheetArea $bg="#ccffcc">
      <RowHeads>{CSV_ROWS.map(([n, h]) => <RowHead key={n} $h={h}>{n}</RowHead>)}</RowHeads>
      <Canvas>
        <ToolHead>
          <span /><span>○○○<b>用</b></span><h2>CSV変換ツール</h2>
          <Notice>
            <p>※新規登録時など白枠内に文字列がない場合のみ押す↓</p><span />
            <p>数分程かかる場合があります</p><button>フォルダ一括設定</button>
          </Notice>
        </ToolHead>
        {STEPS.map((s, i) => (
          <StepBlock key={i}>
            <StepText>{s.text}</StepText>
            {s.note && <StepText $note>{s.note}</StepText>}
            <label htmlFor={`path${i}`}>{s.label}</label>
            <PathInput id={`path${i}`} $on={i === 2} defaultValue={s.path} />
            <button>フォルダ選択{i + 1}</button>
          </StepBlock>
        ))}
        <StepBlock><StepText>⑥下の<a href="#run">「実行」</a>ボタンをクリックすると、エクセルファイルが作成されます。</StepText></StepBlock>
        <Floating $x={171} $y={200} $w={55} $h={21}><BlueButton $pure>実 行</BlueButton></Floating>
        <Frame $x={165} $y={195} $w={66} $h={31} $b={3} />
        <Badge $x={145} $y={201} $d={17}>2</Badge>
        <Floating $x={350} $y={185} $w={252} $h={46}>
          <Process>
            ＜処理内容＞<br />・①で設定したフォルダ内から更新日時が最新のものを解凍する<br />・解凍したCSVファイルをExcelに変換する。<br />
            　(CSVファイルが0件、もしくは複数ある場合はエラーで処理ストップ。変換後のCSVファイルは削除)<br />
            ・Excelに変換したファイルを社内用に編集して、②③で設定したフォルダの中に、ファイルを保存する。
          </Process>
        </Floating>
      </Canvas>
      <VScroll $thumb={184} />
    </SheetArea>
  </Spreadsheet>
);

/* ---------- the manual ---------- */

export default function App() {
  return (
    <Page>
      <GlobalStyle />
      <Line>1.レセコンのメインメニューより「在庫管理」をクリック</Line>
      <Line $top={38}>2.「その他作業」をクリック</Line>
      <Line $top={38}>3.「テキスト出力」をクリック</Line>
      <MainMenuShot />
      <Line $top={113}>4. 在庫管理テキスト出力画面にて各項目を設定</Line>
      <Settings>
        <dt>処理期間</dt><dd>： 前月1ヵ月の期間を指定</dd>
        <dt>出力選択</dt><dd>： 2：入庫</dd>
        <dt>まとめ単位</dt><dd>： なし</dd>
        <dt>薬品出力</dt><dd>： 1：あり</dd>
        <dt>タイトル出力</dt><dd>： 1：あり</dd>
        <dt>出力先</dt><dd>： Dropbox⇒自薬局名フォルダを選択</dd>
      </Settings>
      <Line $top={76}>5.「実行」をクリック</Line>
      <OutputShot />
      <Line $top={187}>6.「はい」をクリック</Line>
      <Dialog w={449} h={160} title="確認" text="指定した条件でテキストを出力します。よろしいですか？">
        <DialogButton $w={104} $marked>はい(<u>Y</u>)</DialogButton>
        <DialogButton $w={98}>いいえ(<u>N</u>)</DialogButton>
      </Dialog>
      <Line $top={187}>7.「OK」をクリック</Line>
      <Dialog w={443} h={147} title="情報" text="処理が終わりました">
        <DialogButton $w={86} $marked>OK</DialogButton>
      </Dialog>
      <Line $top={188}>※　入庫履歴ダウンロード完了後、Ad0の「CSV変換」ボタンより、<br />「CSV変換」を行って下さい。</Line>
      <Line $top={188}>①　「CSV変換」ボタンをクリック</Line>
      <DashboardShot />
      <Line $top={188}>②　「実行」をクリック</Line>
      <CsvToolShot />
    </Page>
  );
}
